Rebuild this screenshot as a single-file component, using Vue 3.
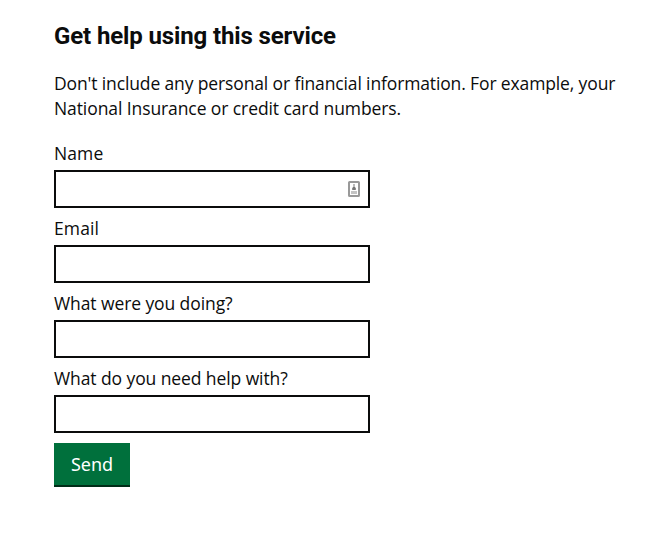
<script setup>
import { ref } from 'vue'

const fields = ref([
  { id: 'name', label: 'Name', value: '', contact: true },
  { id: 'email', label: 'Email', value: '' },
  { id: 'doing', label: 'What were you doing?', value: '' },
  { id: 'help', label: 'What do you need help with?', value: '' },
])
</script>

<template>
  <main class="page">
    <h1 class="heading">Get help using this service</h1>
    <p class="intro">
      <span class="first">Don't include any personal or financial information. For example, your</span><br />
      <span class="second">National Insurance or credit card numbers.</span>
    </p>
    <form @submit.prevent>
      <div v-for="field in fields" :key="field.id" class="group">
        <label :for="field.id" class="label"><span :class="field.id">{{ field.label }}</span></label>
        <div class="control">
          <input :id="field.id" v-model="field.value" type="text" autocomplete="off" />
          <svg v-if="field.contact" class="contact" width="12" height="16" viewBox="0 0 12 16" aria-hidden="true">
            <rect x="1" y="1" width="10" height="14" rx="0.6" fill="#fff" stroke="#999" stroke-width="2" />
            <path d="M6 3v3" stroke="#aaa" stroke-width="1.6" />
            <path d="M4.2 9V7.2L5 6h2l.8 1.2V9z" fill="#777" />
            <path d="M3 11.5h6" stroke="#c4c4c4" stroke-width="3" />
          </svg>
        </div>
      </div>
      <button class="send" type="submit">Send</button>
    </form>
  </main>
</template>

<style>
body {
  background: #fff;
}
</style>

<style scoped>
.page {
  box-sizing: border-box;
  width: 666px;
  height: 560px;
  padding: 21px 0 0 54px;
  color: #0b0c0c;
  font-family: 'Open Sans', 'Noto Sans', sans-serif;
  font-size: 17.5px;
  line-height: 25px;
}
.heading {
  margin: 0 0 20px;
  font-family: Roboto, sans-serif;
  font-size: 24px;
  line-height: 30px;
  font-weight: 700;
  letter-spacing: -0.13px;
  white-space: nowrap;
}
.intro {
  margin: 0 0 20px;
  white-space: nowrap;
}
.first {
  letter-spacing: -0.13px;
}
.second {
  letter-spacing: -0.09px;
}
.label {
  display: block;
  height: 29px;
  letter-spacing: -0.09px;
  white-space: nowrap;
}
.name,
.email {
  letter-spacing: 0.1px;
}
.group {
  height: 75px;
}
.control {
  position: relative;
  width: 316px;
  height: 38px;
}
input {
  display: block;
  box-sizing: border-box;
  width: 100%;
  height: 100%;
  margin: 0;
  padding: 5px;
  border: 2px solid #0b0c0c;
  border-radius: 0;
  background: #fff;
  font: inherit;
  outline: 0;
}
.contact {
  position: absolute;
  right: 10px;
  top: 11px;
}
.send {
  display: block;
  box-sizing: border-box;
  width: 76px;
  height: 44px;
  margin: 2px 0 0;
  padding: 0 0 1px;
  border: 0;
  border-radius: 0;
  background: #00703c;
  box-shadow: inset 0 -2px 0 #002d18;
  color: #fff;
  font: inherit;
  font-family: 'Noto Sans', sans-serif;
  font-size: 18px;
}
</style>
